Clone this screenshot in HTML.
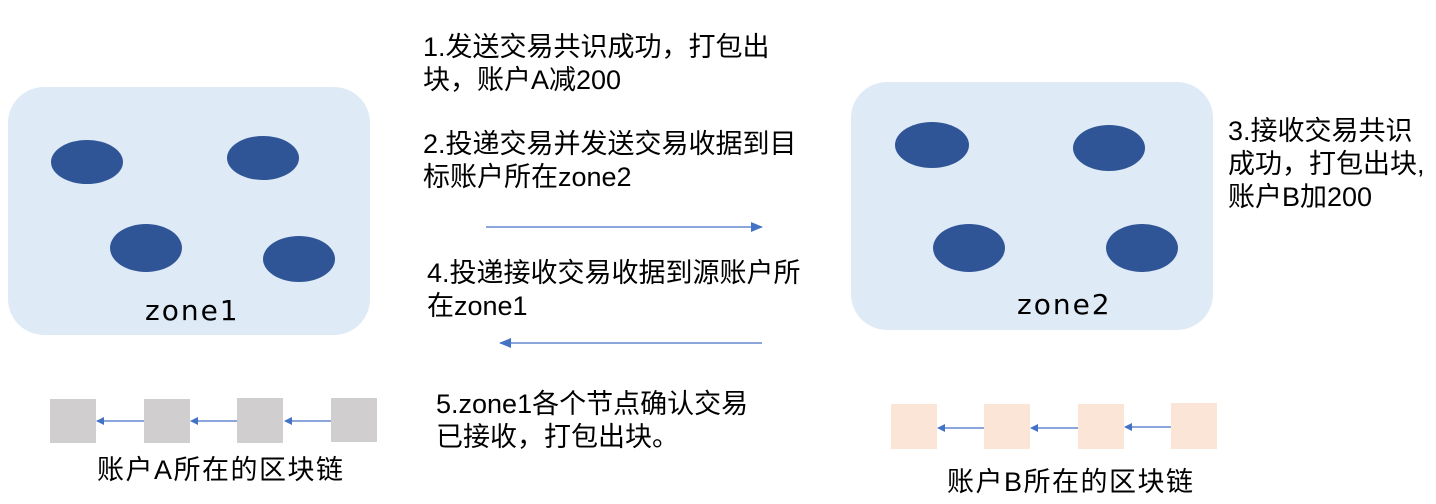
<!DOCTYPE html>
<html><head><meta charset="utf-8"><style>
body{margin:0;width:1436px;height:504px;background:#fff;position:relative;overflow:hidden;font-family:"Liberation Sans","Noto Sans CJK SC",sans-serif;color:#000}
.t{position:absolute;font-size:27px;line-height:33px;white-space:nowrap}
.z{font-family:"DejaVu Sans",sans-serif;font-size:28px;letter-spacing:2px}
</style></head><body>
<svg width="1436" height="504" style="position:absolute;left:0;top:0">
<defs><marker id="a" markerWidth="8" markerHeight="8" refX="7" refY="4" orient="auto" markerUnits="userSpaceOnUse"><path d="M0,0 L8,4 L0,8z" fill="#4472c4"/></marker>
<marker id="b" markerWidth="12" markerHeight="10" refX="11" refY="5" orient="auto" markerUnits="userSpaceOnUse"><path d="M0,0 L12,5 L0,10z" fill="#4472c4"/></marker></defs>
<rect x="8" y="87" width="362" height="248" rx="36" fill="#deeaf6"/>
<rect x="851" y="82" width="362" height="248" rx="36" fill="#deeaf6"/>
<g fill="#2f5597">
<ellipse cx="87" cy="162" rx="36" ry="22"/><ellipse cx="263" cy="158" rx="36" ry="22"/>
<ellipse cx="146" cy="248" rx="36" ry="24"/><ellipse cx="299" cy="259" rx="36" ry="23"/>
<ellipse cx="932" cy="145" rx="37" ry="23"/><ellipse cx="1109" cy="148" rx="36" ry="23"/>
<ellipse cx="969" cy="248" rx="36" ry="24"/><ellipse cx="1142" cy="248" rx="36" ry="24"/>
</g>
<g stroke="#4472c4" stroke-width="1.2">
<line x1="486" y1="227" x2="762" y2="227" marker-end="url(#b)"/>
<line x1="762" y1="343" x2="500" y2="343" marker-end="url(#b)"/>
<line x1="144" y1="421" x2="97" y2="421" marker-end="url(#a)"/>
<line x1="237" y1="421" x2="191" y2="421" marker-end="url(#a)"/>
<line x1="331" y1="421" x2="285" y2="421" marker-end="url(#a)"/>
<line x1="984" y1="428" x2="938" y2="428" marker-end="url(#a)"/>
<line x1="1078" y1="428" x2="1031" y2="428" marker-end="url(#a)"/>
<line x1="1171" y1="427" x2="1125" y2="427" marker-end="url(#a)"/>
</g>
<g fill="#d0cece"><rect x="50" y="399" width="46" height="44"/><rect x="144" y="399" width="46" height="44"/><rect x="237" y="398" width="46" height="45"/><rect x="331" y="398" width="46" height="44"/></g>
<g fill="#fbe5d6"><rect x="891" y="404" width="46" height="45"/><rect x="984" y="404" width="46" height="45"/><rect x="1078" y="404" width="46" height="45"/><rect x="1171" y="403" width="46" height="46"/></g>
</svg>
<div class="t" style="left:423px;top:31px">1.发送交易共识成功，打包出<br>块，账户A减200</div>
<div class="t" style="left:423px;top:128px">2.投递交易并发送交易收据到目<br>标账户所在zone2</div>
<div class="t" style="left:427px;top:257px">4.投递接收交易收据到源账户所<br>在zone1</div>
<div class="t" style="left:436px;top:388px">5.zone1各个节点确认交易<br>已接收，打包出块。</div>
<div class="t" style="left:1228px;top:115px">3.接收交易共识<br>成功，打包出块,<br>账户B加200</div>
<div class="t z" style="left:145px;top:294px">zone1</div>
<div class="t z" style="left:1017px;top:288px">zone2</div>
<div class="t" style="left:97px;top:454px;font-size:27px;letter-spacing:1.5px">账户A所在的区块链</div>
<div class="t" style="left:947px;top:466px;font-size:27px;letter-spacing:1.5px">账户B所在的区块链</div>
</body></html>
